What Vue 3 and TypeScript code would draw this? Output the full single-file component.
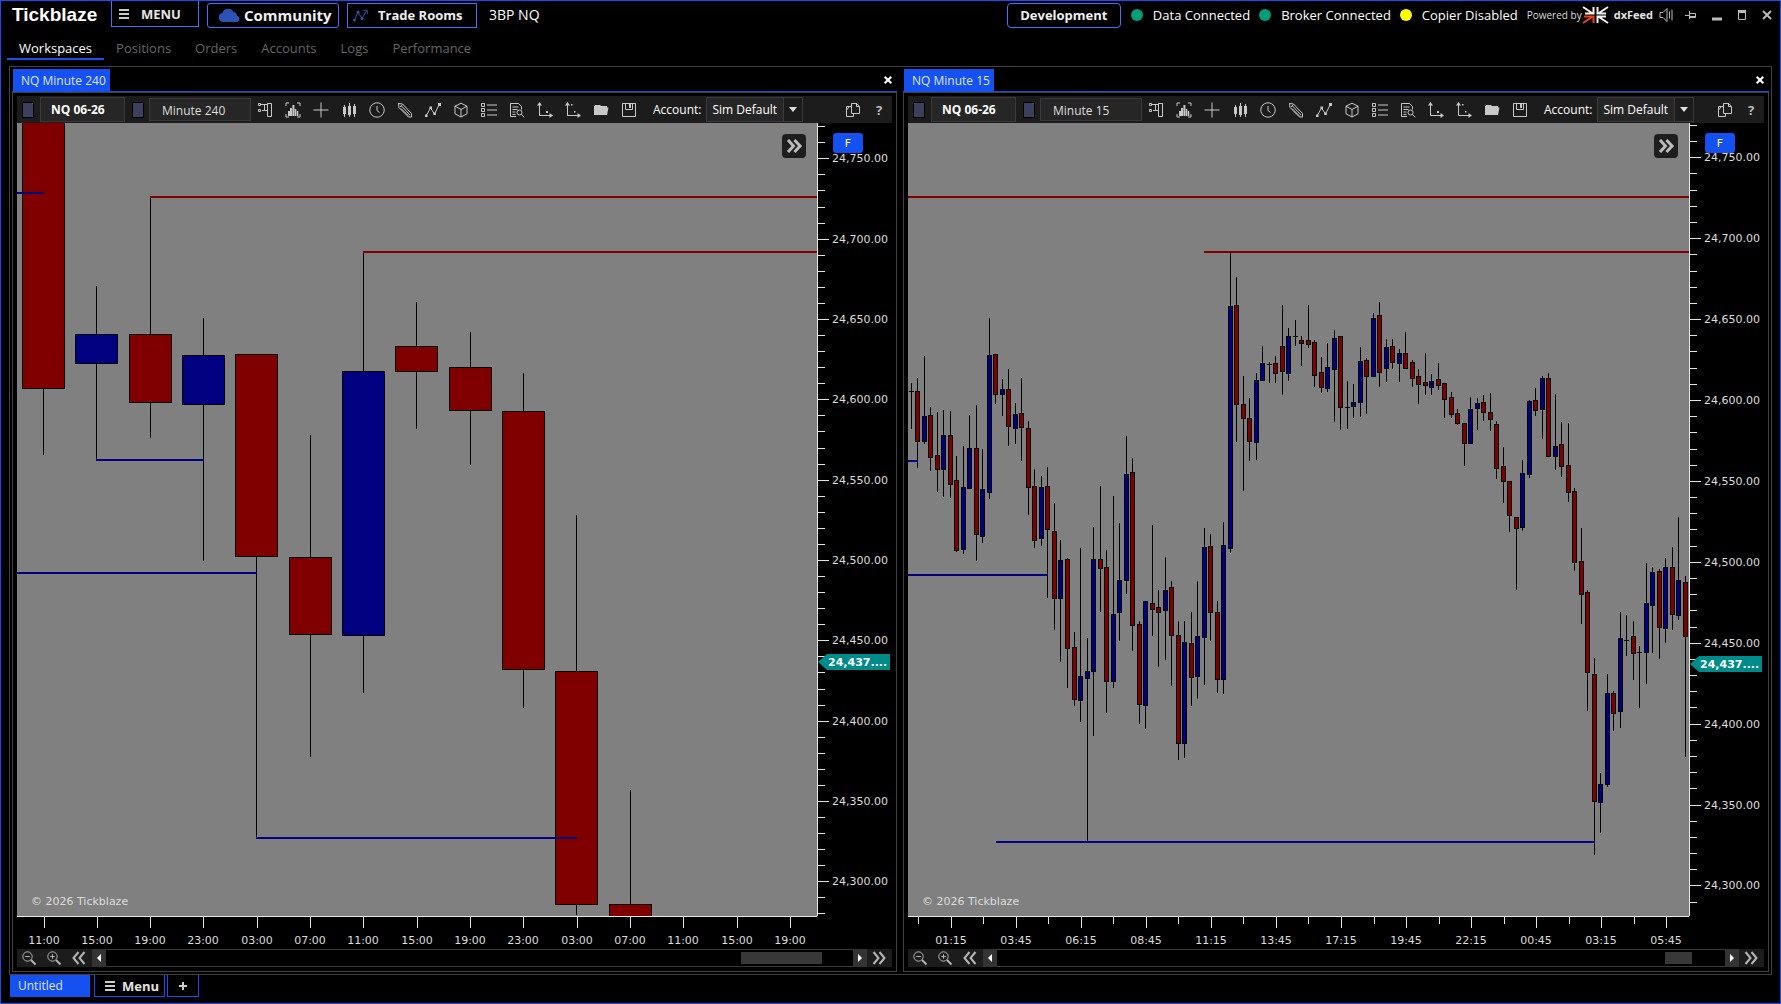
<script setup lang="ts">
import { ref } from 'vue'

type Dir = 'u' | 'd'
/** direction, body top, body bottom, wick top, wick bottom (plot units) */
type Candle = [Dir, number, number, number, number]
interface Level { x1: number; x2: number; y: number; tone: 'high' | 'low' }
interface TimeTick { x: number; label?: string }
interface PriceTick { y: number; label?: string }
interface Chart {
  id: string
  title: string
  interval: string
  width: number
  firstX: number
  step: number
  half: number
  candles: Candle[]
  levels: Level[]
  times: TimeTick[]
  prices: PriceTick[]
  last: number
  thumb: { left: number; width: number }
}
interface Icon { name: string; stroke?: string; fill?: string }

const PLOT_H = 793

const fourHour: Candle[] = [
  ['d', -5, 265, -5, 331],
  ['u', 211, 240, 163, 337],
  ['d', 211, 279, 74, 314],
  ['u', 232, 281, 195, 437],
  ['d', 231, 433, 231, 715],
  ['d', 434, 511, 312, 633],
  ['u', 248, 512, 128, 569],
  ['d', 223, 248, 179, 305],
  ['d', 244, 287, 209, 341],
  ['d', 288, 546, 250, 584],
  ['d', 548, 781, 392, 791],
  ['d', 781, 800, 667, 800],
]

const quarterHour: Candle[] = [
  ['d', 268, 268, 260, 305], ['d', 268, 318, 255, 344], ['u', 293, 318, 233, 320], ['d', 292, 334, 284, 347],
  ['d', 332, 346, 289, 368], ['u', 312, 346, 287, 373], ['d', 312, 361, 288, 374], ['d', 357, 427, 333, 428],
  ['u', 364, 426, 323, 430], ['u', 325, 365, 292, 365], ['d', 325, 411, 282, 437], ['u', 366, 413, 326, 419],
  ['u', 232, 369, 195, 375], ['d', 231, 271, 231, 280], ['u', 266, 271, 256, 292], ['d', 266, 303, 246, 322],
  ['u', 291, 305, 280, 320], ['d', 290, 304, 255, 337], ['d', 305, 364, 298, 391], ['d', 363, 417, 346, 424],
  ['u', 364, 415, 353, 422], ['d', 363, 406, 344, 474], ['d', 408, 475, 380, 506], ['u', 437, 475, 417, 538],
  ['d', 436, 525, 435, 564], ['d', 524, 576, 509, 582], ['u', 553, 577, 425, 598], ['u', 548, 555, 515, 718],
  ['u', 436, 548, 404, 612], ['d', 436, 445, 363, 488], ['d', 444, 558, 427, 589], ['u', 491, 558, 373, 564],
  ['u', 457, 489, 400, 517], ['u', 351, 457, 313, 470], ['d', 349, 502, 335, 527], ['d', 501, 581, 498, 600],
  ['u', 478, 582, 478, 605], ['d', 480, 486, 402, 512], ['d', 484, 489, 467, 543], ['u', 467, 487, 434, 536],
  ['d', 464, 512, 458, 562], ['d', 512, 620, 498, 636], ['u', 519, 620, 498, 634], ['d', 520, 554, 489, 582],
  ['u', 513, 553, 458, 575], ['u', 424, 514, 405, 561], ['d', 423, 489, 411, 517], ['d', 489, 556, 478, 569],
  ['u', 422, 556, 399, 570], ['u', 183, 425, 129, 429], ['d', 182, 281, 154, 318], ['d', 281, 295, 253, 367],
  ['d', 295, 318, 275, 337], ['u', 257, 319, 250, 336], ['u', 240, 257, 223, 257], ['u', 241, 241, 239, 259],
  ['d', 240, 250, 233, 259], ['d', 223, 248, 182, 271], ['u', 213, 250, 205, 257], ['d', 213, 213, 197, 222],
  ['d', 217, 220, 213, 242], ['d', 217, 221, 182, 224], ['d', 219, 252, 217, 263], ['d', 249, 264, 234, 269],
  ['u', 244, 265, 220, 268], ['u', 215, 246, 207, 298], ['d', 213, 284, 213, 306], ['d', 284, 284, 258, 305],
  ['u', 279, 283, 261, 294], ['u', 238, 279, 224, 293], ['d', 237, 253, 235, 290], ['u', 195, 253, 190, 253],
  ['d', 192, 249, 179, 263], ['u', 224, 245, 216, 258], ['d', 223, 239, 216, 245], ['u', 230, 240, 226, 258],
  ['d', 230, 245, 209, 245], ['d', 239, 255, 237, 263], ['d', 253, 261, 246, 280], ['d', 259, 262, 230, 271],
  ['u', 258, 264, 251, 271], ['d', 256, 262, 240, 266], ['d', 260, 276, 260, 294], ['d', 274, 291, 269, 294],
  ['d', 290, 300, 286, 301], ['d', 300, 320, 300, 342], ['u', 286, 320, 274, 320], ['u', 280, 285, 275, 306],
  ['d', 279, 289, 272, 297], ['d', 289, 296, 270, 307], ['d', 301, 345, 298, 355], ['d', 343, 358, 324, 379],
  ['d', 358, 392, 358, 408], ['d', 394, 405, 394, 466], ['u', 350, 404, 337, 407], ['u', 278, 351, 277, 354],
  ['d', 277, 287, 265, 292], ['u', 255, 286, 253, 315], ['d', 255, 333, 250, 333], ['u', 323, 333, 271, 346],
  ['d', 321, 343, 299, 353], ['d', 342, 369, 300, 378], ['d', 368, 439, 365, 447], ['d', 438, 471, 405, 500],
  ['d', 469, 549, 467, 587], ['d', 551, 678, 535, 731], ['u', 661, 679, 650, 709], ['u', 570, 661, 551, 663],
  ['d', 570, 590, 568, 607], ['u', 515, 588, 489, 604], ['u', 517, 517, 492, 532], ['d', 513, 530, 498, 556],
  ['u', 529, 529, 523, 584], ['u', 480, 529, 440, 560], ['u', 449, 482, 444, 529], ['d', 448, 504, 446, 535],
  ['u', 444, 505, 435, 519], ['d', 444, 491, 424, 506], ['u', 457, 492, 394, 496], ['d', 459, 513, 453, 633],
]

function priceTicks(origin: number, perPoint: number): PriceTick[] {
  const ticks: PriceTick[] = []
  for (let p = 24770; p >= 24270; p -= 10) {
    const y = Math.round(origin + (24750 - p) * perPoint)
    if (y < 0 || y >= PLOT_H) continue
    ticks.push({ y, label: p % 50 === 0 ? `${p.toLocaleString('en-US')}.00` : undefined })
  }
  return ticks
}

const fourHourLabels = ['11:00', '15:00', '19:00', '23:00', '03:00', '07:00', '11:00', '15:00', '19:00', '23:00', '03:00', '07:00', '11:00', '15:00', '19:00']
const quarterLabels = ['01:15', '03:45', '06:15', '08:45', '11:15', '13:45', '17:15', '19:45', '22:15', '00:45', '03:15', '05:45']

const quarterTimes: TimeTick[] = []
for (let i = 0; i < 24; i++) {
  quarterTimes.push({ x: Math.round(10 + 32.54 * i), label: i % 2 ? quarterLabels[(i - 1) / 2] : undefined })
}

const charts: Chart[] = [
  {
    id: 'm240',
    title: 'NQ Minute 240',
    interval: 'Minute 240',
    width: 800,
    firstX: 26.4,
    step: 53.33,
    half: 21,
    candles: fourHour,
    levels: [
      { x1: 0, x2: 27, y: 70, tone: 'low' },
      { x1: 133, x2: 800, y: 74, tone: 'high' },
      { x1: 346, x2: 800, y: 129, tone: 'high' },
      { x1: 79, x2: 187, y: 337, tone: 'low' },
      { x1: 0, x2: 240, y: 450, tone: 'low' },
      { x1: 239, x2: 560, y: 715, tone: 'low' },
    ],
    times: fourHourLabels.map((label, i) => ({ x: Math.round(26.6 + 53.3 * i), label })),
    prices: priceTicks(35.3, 1.6067),
    last: 538,
    thumb: { left: 635, width: 81 },
  },
  {
    id: 'm15',
    title: 'NQ Minute 15',
    interval: 'Minute 15',
    width: 781,
    firstX: 3.4,
    step: 6.504,
    half: 2,
    candles: quarterHour,
    levels: [
      { x1: 0, x2: 781, y: 74, tone: 'high' },
      { x1: 296, x2: 781, y: 129, tone: 'high' },
      { x1: 0, x2: 10, y: 338, tone: 'low' },
      { x1: 0, x2: 140, y: 452, tone: 'low' },
      { x1: 88, x2: 687, y: 719, tone: 'low' },
    ],
    times: quarterTimes,
    prices: priceTicks(34.3, 1.618),
    last: 540,
    thumb: { left: 668, width: 27 },
  },
]

const cx = (c: Chart, i: number) => Math.floor(c.firstX + c.step * i)
const pct = (v: number, total: number) => `${(v / total) * 100}%`

const tools: Icon[] = [
  { name: 'Chart trader', stroke: 'M10.5 1.5h4v13h-4zM1.5 1.5h2v2h-2zM1.5 7.5h2v2h-2zM3.5 2.5h7M5 8.5h5.5M7.5 2.5v6' },
  { name: 'Volume profile', stroke: 'M1 4V1h3M12 1h3v3M15 12v3h-3M4 15H1v-3', fill: 'M3 9h2v5H3zM5 6h2v8H5zM7.400 3h2v11h-2zM9.800 7h1.500v7H9.800zM11.800 9h1.500v5h-1.500z' },
  { name: 'Crosshair', stroke: 'M8 .5v15M.5 8h15' },
  { name: 'Bar style', stroke: 'M3.500 3v12M8.500 1v14M13.500 2v13', fill: 'M2 5h3v7H2zM7 4h3v9H7zM12 4h3v8h-3z' },
  { name: 'Session', stroke: 'M8 .8a7.200 7.200 0 1 0 .01 0zM8 4v4.500l2.500 2' },
  { name: 'Drawing tools', stroke: 'M1.500 1.500l4 .5 9 9.500v3.500h-3L2 5.500zM3 5l2.500-2.500M4.500 4l8.500 9M4 6.500l8 8' },
  { name: 'Indicators', stroke: 'M1 14L5.500 6l4 6L14.500 2', fill: 'M4.500 4.500h2.500V7H4.500zM8.300 10.500h2.500V13H8.300zM13 1h3v3h-3zM0 12.500h2.500V15H0z' },
  { name: 'Strategies', stroke: 'M8 1.200l6 3v7.600l-6 3.200-6-3.200V4.200zM2 4.200l6 3.300 6-3.300M8 7.500V15' },
  { name: 'Object list', stroke: 'M.5 1.500h3v3h-3zM.5 6.500h3v3h-3zM.5 11.500h3v3h-3zM6 3h10M6 8h10M6 13h10' },
  { name: 'Data inspector', stroke: 'M7 14.500H1.500v-13h8l3 3v3M3.500 5h6M3.500 7.500h5M3.500 10h3M3.500 12.500h3M8 10.500a2.500 2.500 0 1 0 5 0a2.500 2.500 0 1 0-5 0M12.300 12.300l3 3' },
  { name: 'Fix scale', stroke: 'M2.500 1v12.500H14', fill: 'M0 3.500L2.500 0 5 3.500zM12.500 11l3.500 2.500-3.500 2.500zM9 9h2v2H9z' },
  { name: 'Auto scale', stroke: 'M2.500 1v12.500H14', fill: 'M0 3.500L2.500 0 5 3.500zM12.500 11l3.500 2.500-3.500 2.500zM6 2h1.500v1.500H6zM9 9h1.500v1.500H9z' },
  { name: 'Open template', fill: 'M1 13V4h1V3h5l1 1h6v1.500h1.500L14 13z' },
  { name: 'Save template', stroke: 'M1.500 1.500h13v13h-13zM4.500 1.500v6h7v-6', fill: 'M8 2h2v4H8z' },
]

const sections = ['Workspaces', 'Positions', 'Orders', 'Accounts', 'Logs', 'Performance']
const activeSection = ref('Workspaces')
const statuses = [
  { label: 'Data Connected', tone: 'ok' },
  { label: 'Broker Connected', tone: 'ok' },
  { label: 'Copier Disabled', tone: 'off' },
]
const account = ref('Sim Default')
</script>

<template>
  <div class="window">
    <header class="topbar">
      <span class="brand">Tickblaze</span>
      <button class="menu-btn" type="button">
        <svg class="burger" viewBox="0 0 10 10"><path d="M0 1h10M0 5h10M0 9h10" /></svg>
        <span>MENU</span>
      </button>
      <button class="link-btn community" type="button">
        <svg class="cloud" viewBox="0 0 22 14"><path d="M5 14a4.500 4.500 0 0 1-.6-8.900A6 6 0 0 1 15.500 4 4 4 0 0 1 19 7.700 3.200 3.200 0 0 1 18.500 14z" /></svg>
        <span>Community</span>
      </button>
      <button class="link-btn rooms" type="button">
        <svg class="rooms-icon" viewBox="0 0 16 14"><path d="M1.500 12L5 4l4 6.500L14 2M10.500 2.500L14 2l.5 3.500" /><circle cx="1.500" cy="12" r="1.500" /><circle cx="5" cy="4" r="1.500" /><circle cx="9" cy="10.500" r="1.500" /></svg>
        <span>Trade Rooms</span>
      </button>
      <span class="workspace-name">3BP NQ</span>
      <div class="spacer"></div>
      <button class="link-btn dev" type="button">Development</button>
      <span v-for="s in statuses" :key="s.label" class="status"><i class="dot" :class="s.tone"></i>{{ s.label }}</span>
      <span class="powered">Powered by</span>
      <svg class="dx-logo" viewBox="0 0 27 18">
        <path d="M1 1l9 6M3 7.500h8.500V1M26 1l-9 6M24 7.500h-8.500V1M26 17l-9-6M24 10.500h-8.500V17" />
        <path class="accent" d="M1 17l9-6M2 10.500h9.500V17" />
      </svg>
      <span class="dxfeed">dxFeed</span>
      <button class="win speaker" type="button" aria-label="Sound"><svg viewBox="0 0 14 14"><path d="M1 4.500h3l4-4v13l-4-4H1zM10.500 3.500v7M13 1.500v11" /></svg></button>
      <button class="win pin" type="button" aria-label="Pin"><svg viewBox="0 0 12 10"><path d="M0 5.500h4M4.500 1v8M4.500 3.500h6v4h-6M4.500 6.500h6" /></svg></button>
      <button class="win" type="button" aria-label="Minimize"><svg viewBox="0 0 10 12"><path d="M0 10h10" stroke-width="3" /></svg></button>
      <button class="win" type="button" aria-label="Maximize"><svg viewBox="0 0 10 12"><path d="M1.500 2v8.500h7V2M1 2.500h8" stroke-width="1" /><path d="M1 2.500h8" stroke-width="3" /></svg></button>
      <button class="win" type="button" aria-label="Close"><svg viewBox="0 0 10 12"><path d="M1 2l8 8M9 2l-8 8" stroke-width="2" /></svg></button>
    </header>

    <nav class="sections">
      <a v-for="s in sections" :key="s" href="#" :class="{ active: s === activeSection }" @click.prevent="activeSection = s">{{ s }}</a>
    </nav>

    <main class="workspace">
      <section v-for="c in charts" :key="c.id" class="dock" :class="c.id">
        <div class="dock-head">
          <span class="dock-tab">{{ c.title }}</span>
          <button class="dock-close" type="button" :aria-label="`Close ${c.title}`"><svg viewBox="0 0 8 8"><path d="M.7.7l6.600 6.600M7.300.7L.7 7.300" /></svg></button>
        </div>
        <div class="dock-body">
          <div class="toolbar">
            <button class="swatch" type="button" aria-label="Instrument link"></button>
            <input class="field symbol" type="text" aria-label="Instrument" value="NQ 06-26" />
            <button class="swatch second" type="button" aria-label="Interval link"></button>
            <input class="field interval" type="text" aria-label="Interval" :value="c.interval" />
            <div class="tools">
              <button v-for="t in tools" :key="t.name" class="tool" type="button" :aria-label="t.name">
                <svg viewBox="0 0 16 16"><path v-if="t.stroke" class="st" :d="t.stroke" /><path v-if="t.fill" class="fl" :d="t.fill" /></svg>
              </button>
            </div>
            <label class="account-label" :for="`acc-${c.id}`">Account:</label>
            <div class="account">
              <select :id="`acc-${c.id}`" v-model="account"><option>Sim Default</option></select>
              <svg viewBox="0 0 8 5"><path d="M0 0h8L4 5z" /></svg>
            </div>
            <div class="spacer"></div>
            <button class="tool copy" type="button" aria-label="Duplicate"><svg viewBox="0 0 16 16"><path class="st" d="M6.500 11.500v-10h5l3 3v7zM11.500 1.500v3h3M6.500 4.500h-5v10h7v-3M1.500 8l3-3.500" /></svg></button>
            <button class="help" type="button">?</button>
          </div>

          <div class="chart">
            <div class="plot">
              <svg class="canvas" :viewBox="`0 0 ${c.width} ${PLOT_H}`" preserveAspectRatio="none">
                <g v-for="(k, i) in c.candles" :key="i">
                  <rect :x="cx(c, i)" :y="k[3]" width="1" :height="k[4] - k[3] + 1" fill="#000" />
                  <rect :x="cx(c, i) - c.half" :y="k[1]" :width="c.half * 2 + 1" :height="k[2] - k[1] + 1" fill="#000" />
                  <rect v-if="k[2] - k[1] > 1" :x="cx(c, i) - c.half + 1" :y="k[1] + 1" :width="c.half * 2 - 1" :height="k[2] - k[1] - 1" :class="k[0]" />
                </g>
                <rect v-for="(l, i) in c.levels" :key="`l${i}`" :x="l.x1" :y="l.y - 1" :width="l.x2 - l.x1" height="2" :class="l.tone" />
              </svg>
              <button class="jump" type="button" aria-label="Jump to latest"><svg viewBox="0 0 14 14"><path d="M1 1l5.500 6L1 13M7.500 1L13 7l-5.500 6" /></svg></button>
              <span class="copyright">© 2026 Tickblaze</span>
            </div>
            <div class="price-axis">
              <svg class="canvas" :viewBox="`0 0 75 ${PLOT_H}`" preserveAspectRatio="none">
                <rect x="0" y="0" width="1" :height="PLOT_H" />
                <rect v-for="(t, i) in c.prices" :key="i" x="1" :y="t.y" :width="t.label ? 11 : 7" height="1" />
              </svg>
              <button class="fixed" type="button">F</button>
              <template v-for="(t, i) in c.prices" :key="i">
                <span v-if="t.label" class="price" :style="{ top: pct(t.y, PLOT_H) }">{{ t.label }}</span>
              </template>
              <span class="last" :style="{ top: pct(c.last, PLOT_H) }">24,437....</span>
            </div>
            <div class="time-axis">
              <svg class="canvas" :viewBox="`0 0 ${c.width} 33`" preserveAspectRatio="none">
                <rect x="0" y="0" :width="c.width" height="1" />
                <rect v-for="(t, i) in c.times" :key="i" :x="t.x" y="1" width="1" :height="t.label ? 11 : 7" />
              </svg>
              <template v-for="(t, i) in c.times" :key="i">
                <span v-if="t.label" class="time" :style="{ left: pct(t.x, c.width) }">{{ t.label }}</span>
              </template>
            </div>
          </div>

          <div class="scroller">
            <button class="nav-btn" type="button" aria-label="Zoom out"><svg viewBox="0 0 14 14"><circle cx="5.500" cy="5.500" r="4.700" /><path d="M3.200 5.500h4.600" /><path class="thick" d="M9 9l4.500 4.500" /></svg></button>
            <button class="nav-btn" type="button" aria-label="Zoom in"><svg viewBox="0 0 14 14"><circle cx="5.500" cy="5.500" r="4.700" /><path d="M3.200 5.500h4.600M5.500 3.200v4.600" /><path class="thick" d="M9 9l4.500 4.500" /></svg></button>
            <button class="nav-btn" type="button" aria-label="Scroll to start"><svg viewBox="0 0 14 14"><path class="thick" d="M6.500 1L1.500 7l5 6M12.500 1l-5 6 5 6" /></svg></button>
            <button class="arrow" type="button" aria-label="Scroll left"><svg viewBox="0 0 4 8"><path d="M4 0v8L0 4z" /></svg></button>
            <div class="track"><div class="thumb" :style="{ left: pct(c.thumb.left, c.width - 53), width: pct(c.thumb.width, c.width - 53) }"></div></div>
            <button class="arrow" type="button" aria-label="Scroll right"><svg viewBox="0 0 4 8"><path d="M0 0v8l4-4z" /></svg></button>
            <button class="nav-btn" type="button" aria-label="Scroll to end"><svg viewBox="0 0 14 14"><path class="thick" d="M1.500 1l5 6-5 6M7.500 1l5 6-5 6" /></svg></button>
          </div>
        </div>
      </section>
    </main>

    <footer class="pages">
      <button class="page current" type="button">Untitled</button>
      <button class="page page-menu" type="button"><svg class="burger" viewBox="0 0 10 10"><path d="M0 1h10M0 5h10M0 9h10" /></svg>Menu</button>
      <button class="page add" type="button" aria-label="Add workspace"><svg viewBox="0 0 8 8"><path d="M4 0v8M0 4h8" /></svg></button>
    </footer>
  </div>
</template>

<style>
body {
  background: #000;
}
</style>

<style scoped>
* {
  box-sizing: border-box;
}
button,
input,
select {
  font: inherit;
  color: inherit;
  margin: 0;
  padding: 0;
  border: 0;
  border-radius: 0;
  background: none;
}
svg {
  display: block;
  overflow: visible;
  flex: none;
}
.window {
  height: 100vh;
  min-height: 480px;
  display: flex;
  flex-direction: column;
  border: 1px solid #1550f0;
  background: #000;
  color: #fff;
  font-family: "Open Sans", "Noto Sans", sans-serif;
  font-size: 13px;
  line-height: 16px;
  white-space: nowrap;
}
.spacer {
  flex: 1;
}
.topbar {
  display: flex;
  align-items: center;
  height: 28px;
  padding: 0 8px 0 11px;
}
.brand {
  width: 99px;
  font: bold 19px/24px "Liberation Sans", Arial, sans-serif;
}
.menu-btn {
  display: flex;
  align-items: center;
  gap: 12px;
  align-self: flex-start;
  width: 88px;
  height: 26px;
  padding-left: 7px;
  border: 1px solid #3f74ff;
  border-top: 0;
  font-weight: 700;
  color: #e4e4e4;
}
.burger {
  width: 10px;
  height: 10px;
  stroke: #ccc;
  stroke-width: 2;
}
.link-btn {
  display: flex;
  align-items: center;
  height: 25px;
  margin-left: 8px;
  border: 1px solid #3f74ff;
  border-radius: 3px;
  font-weight: 700;
  color: #f0f0f0;
}
.community {
  width: 132px;
  gap: 4px;
  padding-left: 10px;
  font-size: 15px;
}
.cloud {
  width: 22px;
  height: 14px;
  fill: #2d52b6;
}
.rooms {
  width: 130px;
  gap: 9px;
  padding-left: 5px;
  border-radius: 0;
}
.rooms-icon {
  width: 16px;
  height: 14px;
  fill: #2d52b6;
}
.rooms-icon path {
  fill: none;
  stroke: #2d52b6;
  stroke-width: 1;
}
.workspace-name {
  margin-left: 12px;
  font-size: 14px;
}
.dev {
  width: 114px;
  justify-content: center;
  border-radius: 4px;
  margin-right: 10px;
}
.status {
  display: flex;
  align-items: center;
  gap: 10px;
  margin-right: 9px;
}
.dot {
  width: 12px;
  height: 12px;
  border-radius: 50%;
}
.ok {
  background: #009e78;
}
.off {
  background: #ff0;
}
.powered {
  font-size: 10px;
  color: #ddd;
}
.dx-logo {
  width: 27px;
  height: 18px;
  fill: none;
  stroke: #f2f2f2;
  stroke-width: 2;
}
.dx-logo .accent {
  stroke: #e8401c;
}
.dxfeed {
  margin: 0 6px 0 5px;
  font-size: 11px;
  font-weight: 700;
  color: #e4e4e4;
}
.win {
  display: grid;
  place-items: center;
  margin-left: 15px;
}
.win svg {
  width: 10px;
  height: 12px;
  fill: none;
  stroke: #bbb;
}
.win.speaker {
  margin-left: 0;
}
.speaker svg {
  width: 14px;
  height: 14px;
}
.win.pin {
  margin-left: 12px;
}
.pin svg {
  width: 12px;
  height: 10px;
}
.sections {
  display: flex;
  height: 31px;
  padding-left: 6px;
}
.sections a {
  padding: 11px 12px 0;
  border-bottom: 2px solid transparent;
  color: #666;
  text-decoration: none;
}
.sections a.active {
  color: #fff;
  border-color: #1550f0;
}
.workspace {
  flex: 1;
  min-height: 0;
  display: flex;
  gap: 6px;
  margin: 6px 8px 0;
  padding: 2px;
  border: 1px solid #414141;
}
.dock {
  display: flex;
  flex-direction: column;
  min-width: 0;
}
.m240 {
  flex: 885 1 0;
}
.m15 {
  flex: 866 1 0;
}
.dock-head {
  display: flex;
  justify-content: space-between;
  align-items: center;
  height: 23px;
  padding: 0 5px 0 1px;
  border-bottom: 1px solid #1a50e0;
}
.dock-tab {
  height: 22px;
  padding: 0 4px 0 8px;
  background: #1550f0;
  font-size: 12px;
  line-height: 23px;
  color: #dfe6ff;
}
.dock-close svg {
  width: 8px;
  height: 8px;
  stroke: #fff;
  stroke-width: 2;
}
.dock-body {
  flex: 1;
  min-height: 0;
  display: flex;
  flex-direction: column;
  padding: 3px 4px 4px;
  border: 1px solid #414141;
}
.toolbar {
  display: flex;
  align-items: center;
  height: 27px;
  padding: 0 5px;
  background: #1c1c1c;
  overflow: hidden;
}
.swatch {
  flex: none;
  width: 12px;
  height: 16px;
  border: 1px solid #000;
  background: #3d3f5c;
}
.second {
  margin-left: 7px;
}
.field {
  background: #262626;
  border: 1px solid #3a3a3a;
}
.symbol {
  width: 85px;
  height: 25px;
  margin-left: 6px;
  padding-left: 10px;
  font-weight: 700;
  font-size: 12px;
}
.interval {
  width: 102px;
  height: 23px;
  margin-left: 5px;
  padding: 1px 0 0 12px;
  font-size: 12px;
  color: #ddd;
}
.tools {
  display: flex;
  gap: 12px;
  margin-left: 6px;
}
.tool {
  flex: none;
}
.tool svg {
  width: 16px;
  height: 16px;
}
.st {
  fill: none;
  stroke: #c8c8c8;
}
.fl {
  fill: #c8c8c8;
}
.account-label {
  margin-left: 16px;
  padding-top: 1px;
  font-size: 12px;
}
.account {
  flex: none;
  position: relative;
  width: 97px;
  height: 25px;
  margin-left: 5px;
}
.account select {
  appearance: none;
  width: 100%;
  height: 100%;
  padding: 1px 0 0 5px;
  border: 1px solid #3a3a3a;
  background: linear-gradient(90deg, #262626 76px, #3a3a3a 76px 77px, #1c1c1c 77px);
  font-size: 12px;
}
.account svg {
  position: absolute;
  right: 6px;
  top: 10px;
  width: 8px;
  height: 5px;
  fill: #ddd;
  pointer-events: none;
}
.help {
  width: 16px;
  margin-left: 10px;
  font-weight: 700;
  color: #bbb;
}
.chart {
  flex: 1;
  min-height: 0;
  display: grid;
  grid-template-columns: 1fr 75px;
  grid-template-rows: 1fr 33px;
  font-family: "DejaVu Sans", Verdana, sans-serif;
  font-size: 11px;
  line-height: 14px;
  color: #ddd;
}
.plot,
.price-axis,
.time-axis {
  position: relative;
}
.plot {
  background: #808080;
  overflow: hidden;
}
.canvas {
  position: absolute;
  inset: 0;
  width: 100%;
  height: 100%;
  fill: #e6e6e6;
  shape-rendering: crispEdges;
}
.plot .canvas {
  overflow: hidden;
}
.u,
.low {
  fill: #000080;
}
.d,
.high {
  fill: #800000;
}
.jump {
  position: absolute;
  top: 11px;
  right: 11px;
  display: grid;
  place-items: center;
  width: 24px;
  height: 24px;
  border-radius: 4px;
  background: #1e1e1e;
}
.jump svg {
  width: 14px;
  height: 14px;
  fill: none;
  stroke: #bbb;
  stroke-width: 3;
}
.copyright {
  position: absolute;
  left: 14px;
  bottom: 7px;
}
.price {
  position: absolute;
  left: 15px;
  margin-top: 1px;
  transform: translateY(-50%);
}
.fixed {
  position: absolute;
  top: 10px;
  left: 16px;
  width: 30px;
  height: 20px;
  padding-top: 2px;
  border-radius: 3px;
  background: #1550f0;
  color: #fff;
}
.last {
  position: absolute;
  left: 1px;
  width: 72px;
  height: 16px;
  margin-top: 1px;
  padding-left: 10px;
  background: #008b8b;
  clip-path: polygon(0 50%, 9px 0, 100% 0, 100% 100%, 9px 100%);
  transform: translateY(-50%);
  font-weight: 700;
  line-height: 17px;
  color: #fff;
}
.time {
  position: absolute;
  top: 18px;
  transform: translateX(-50%);
}
.scroller {
  display: flex;
  height: 18px;
}
.nav-btn,
.arrow {
  flex: none;
  display: grid;
  place-items: center;
  width: 25px;
  background: #1c1c1c;
}
.nav-btn {
  padding-right: 1px;
}
.nav-btn svg {
  width: 14px;
  height: 14px;
  fill: none;
  stroke: #b4b4b4;
}
.nav-btn .thick {
  stroke-width: 2;
}
.arrow {
  width: 14px;
  background: #333;
}
.arrow svg {
  width: 4px;
  height: 8px;
  fill: #fff;
}
.track {
  flex: 1;
  position: relative;
  border: solid #3a3a3a;
  border-width: 1px 0;
}
.thumb {
  position: absolute;
  top: 2px;
  bottom: 2px;
  background: #383838;
}
.pages {
  display: flex;
  height: 28px;
  padding: 0 0 6px 9px;
}
.page {
  display: flex;
  align-items: center;
}
.current {
  width: 80px;
  padding-left: 8px;
  background: #1550f0;
  font-size: 12px;
  color: #dfe6ff;
}
.page-menu {
  gap: 7px;
  width: 71px;
  margin-left: 4px;
  padding-left: 10px;
  border: 1px solid #1550f0;
  border-top: 0;
  font-weight: 700;
  color: #e4e4e4;
}
.add {
  justify-content: center;
  width: 32px;
  margin-left: 2px;
  border: 1px solid #1550f0;
  border-top: 0;
}
.add svg {
  width: 8px;
  height: 8px;
  stroke: #ccc;
  stroke-width: 2;
}
</style>
